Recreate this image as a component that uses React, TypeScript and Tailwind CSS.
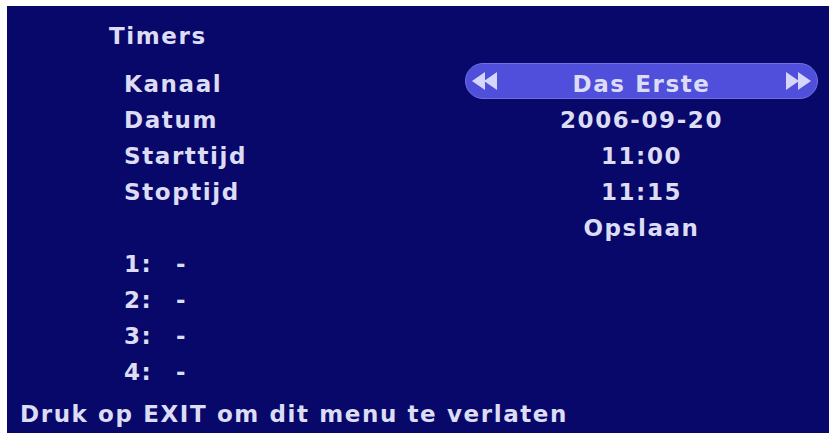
import React from "react";

const rows: { label: string; value: string }[] = [
  { label: "Datum", value: "2006-09-20" },
  { label: "Starttijd", value: "11:00" },
  { label: "Stoptijd", value: "11:15" },
  { label: "", value: "Opslaan" },
];

const slots = ["1:", "2:", "3:", "4:"];

function Arrows({ dir }: { dir: "left" | "right" }) {
  const pts =
    dir === "left"
      ? ["13,0 0,9 13,18", "25,0 12,9 25,18"]
      : ["0,0 13,9 0,18", "12,0 25,9 12,18"];
  return (
    <svg width="25" height="18" viewBox="0 0 25 18" className="shrink-0">
      {pts.map((p) => (
        <polygon key={p} points={p} fill="#d6d6fa" />
      ))}
    </svg>
  );
}

export default function App() {
  return (
    <div className="h-[437px] w-[831px] bg-white pb-[4px] pl-[7px] pr-[2px] pt-[6px]">
      <div
        className="flex h-full flex-col bg-[#08086a] pt-[12px] text-[23px] font-bold leading-[36px] tracking-[1.6px] text-[#dcdcf5]"
        style={{ fontFamily: '"DejaVu Sans", Verdana, sans-serif' }}
      >
        <div className="pl-[102px]">Timers</div>

        <div className="mt-[12px] flex pl-[117px] pr-[11px]">
          <div className="w-[341px]">Kanaal</div>
          <div className="-mt-[3px] mb-[3px] flex h-[36px] flex-1 items-center justify-between rounded-full border border-[#7070e2] bg-[#4f4fdb] px-[6px]">
            <Arrows dir="left" />
            <span className="pt-[6px] leading-[30px]">Das Erste</span>
            <Arrows dir="right" />
          </div>
        </div>

        {rows.map((r) => (
          <div key={r.value} className="flex pl-[117px] pr-[11px]">
            <div className="w-[341px]">{r.label}</div>
            <div className="flex-1 text-center">{r.value}</div>
          </div>
        ))}

        {slots.map((s) => (
          <div key={s} className="flex pl-[117px]">
            <span className="w-[52px]">{s}</span>
            <span>-</span>
          </div>
        ))}

        <div className="mt-[6px] pl-[13px]">Druk op EXIT om dit menu te verlaten</div>
      </div>
    </div>
  );
}
